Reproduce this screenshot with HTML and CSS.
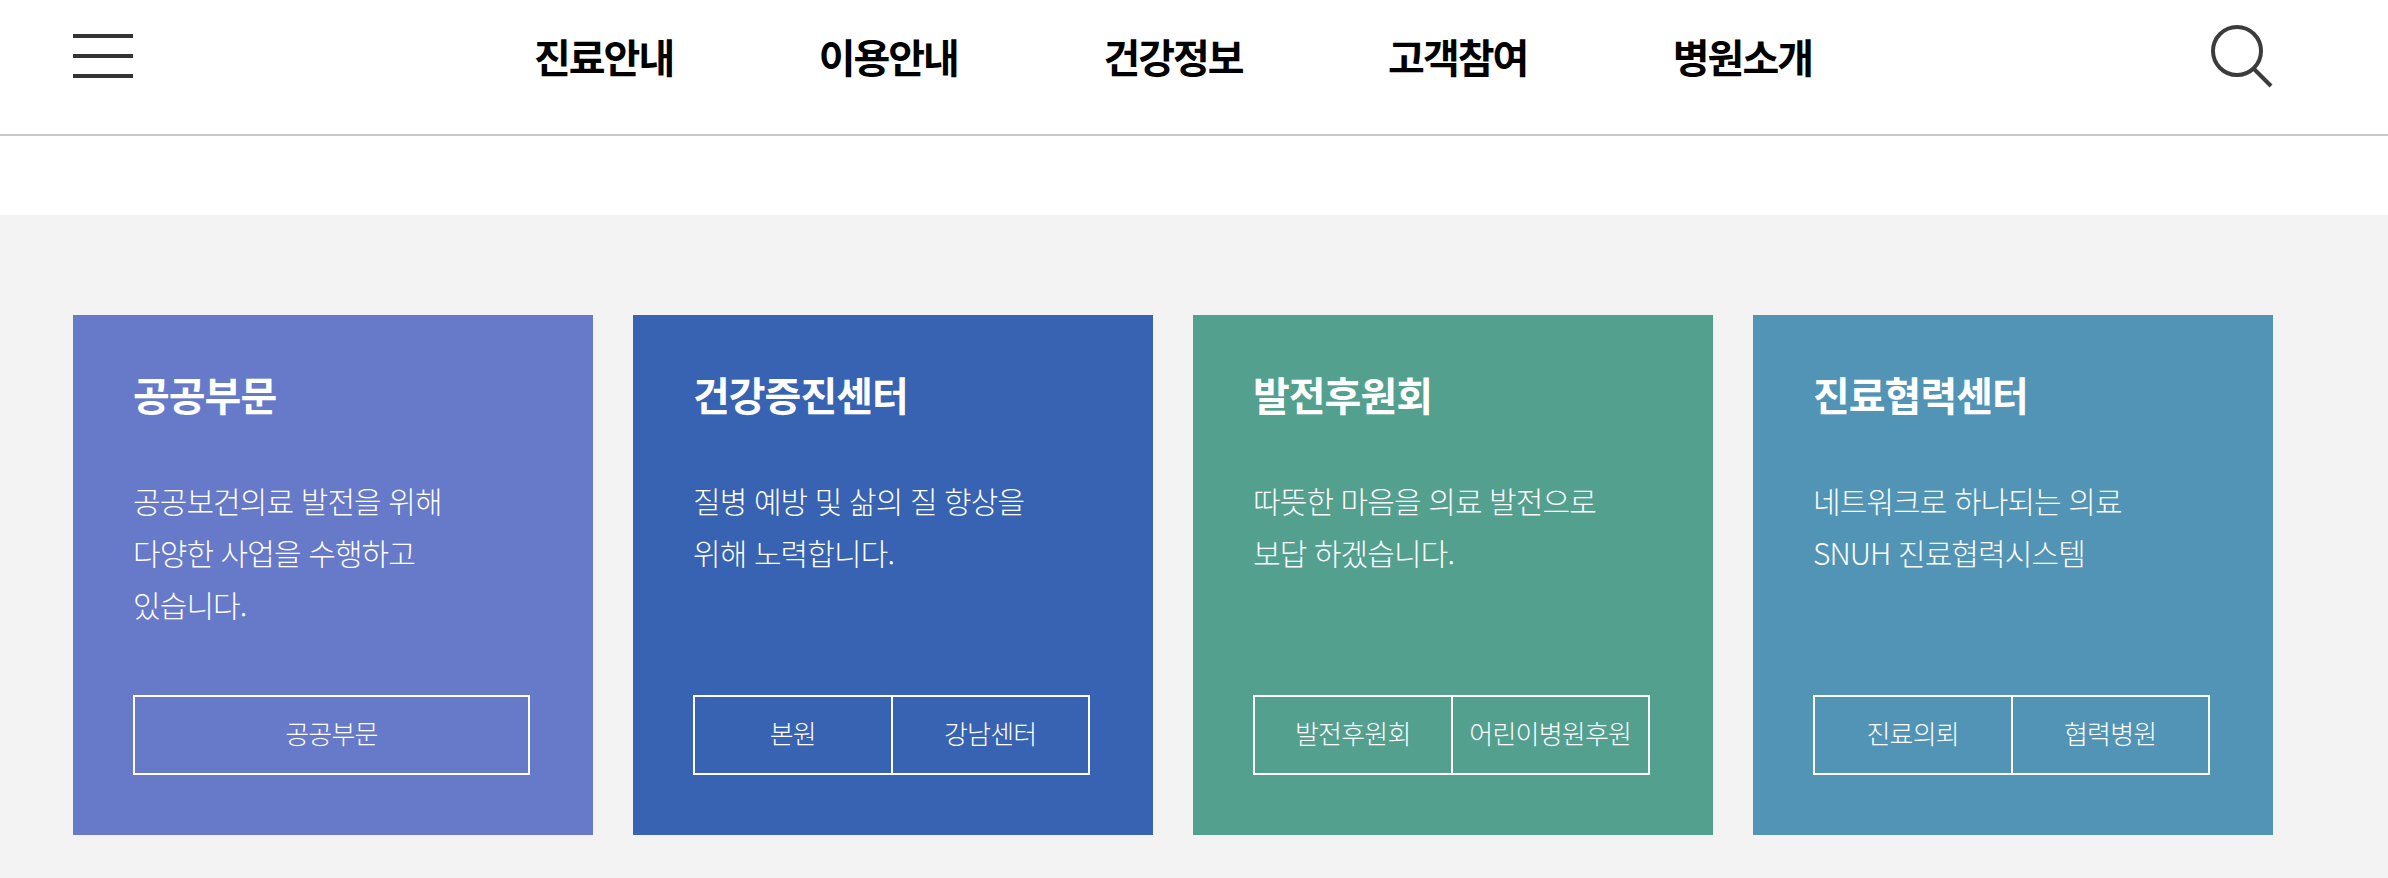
FILE: index.html

```html
<!DOCTYPE html>
<html lang="ko">
<head>
  <meta charset="UTF-8">
  <title>서울대학교병원</title>
  <link rel="stylesheet" href="styles.css">
</head>
<body>

<header class="header">
  <a class="menu-btn" href="#">
    <span></span>
    <span></span>
    <span></span>
  </a>
  <nav class="gnb">
    <a href="#">진료안내</a>
    <a href="#">이용안내</a>
    <a href="#">건강정보</a>
    <a href="#">고객참여</a>
    <a href="#">병원소개</a>
  </nav>
  <a class="search-btn" href="#">
    <svg width="62" height="64" viewBox="0 0 62 64">
      <circle cx="26" cy="26" r="24" fill="none" stroke="#3c3c3c" stroke-width="4"/>
      <path d="M43 44 L60 61" fill="none" stroke="#3c3c3c" stroke-width="4"/>
    </svg>
  </a>
</header>

<section class="cards">
  <div class="card card-public">
    <h3>공공부문</h3>
    <p>공공보건의료 발전을 위해<br>다양한 사업을 수행하고<br>있습니다.</p>
    <div class="card-links">
      <a href="#">공공부문</a>
    </div>
  </div>
  <div class="card card-health">
    <h3>건강증진센터</h3>
    <p>질병 예방 및 삶의 질 향상을<br>위해 노력합니다.</p>
    <div class="card-links">
      <a href="#">본원</a>
      <a href="#">강남센터</a>
    </div>
  </div>
  <div class="card card-donate">
    <h3>발전후원회</h3>
    <p>따뜻한 마음을 의료 발전으로<br>보답 하겠습니다.</p>
    <div class="card-links">
      <a href="#">발전후원회</a>
      <a href="#">어린이병원후원</a>
    </div>
  </div>
  <div class="card card-network">
    <h3>진료협력센터</h3>
    <p>네트워크로 하나되는 의료<br>SNUH 진료협력시스템</p>
    <div class="card-links">
      <a href="#">진료의뢰</a>
      <a href="#">협력병원</a>
    </div>
  </div>
</section>

</body>
</html>
```

FILE: styles.css

```css
* {
  box-sizing: border-box;
}
body {
  margin: 0;
  background-color: #fff;
  font-family: "Noto Sans CJK KR", "Noto Sans", sans-serif;
}
a {
  color: inherit;
  text-decoration: none;
}
.header {
  display: flex;
  align-items: center;
  height: 136px;
  padding: 0 115px 0 73px;
  border-bottom: 2px solid #c8c8c8;
}
.menu-btn {
  display: flex;
  flex-direction: column;
  justify-content: space-between;
  width: 60px;
  height: 44px;
  margin-top: -22px;
}
.menu-btn span {
  display: block;
  height: 4px;
  background-color: #333;
}
.gnb {
  display: flex;
  gap: 145.5px;
  margin-left: 401px;
  margin-top: -22px;
  color: #000;
  font-size: 40px;
  font-weight: 700;
  letter-spacing: -2px;
  line-height: 60px;
}
.search-btn {
  display: block;
  height: 64px;
  margin-left: auto;
  margin-top: -20px;
}
.cards {
  display: flex;
  gap: 40px;
  margin-top: 79px;
  padding: 100px 115px 43px 73px;
  background-color: #f3f3f3;
}
.card {
  display: flex;
  flex-direction: column;
  width: 520px;
  height: 520px;
  padding: 49px 63px 60px 60px;
  color: #fff;
}
.card-public { background-color: #6779c9; }
.card-health { background-color: #3862b2; }
.card-donate { background-color: #54a08f; }
.card-network { background-color: #5194b5; }
.card h3 {
  margin: 0 0 50px;
  font-size: 40px;
  font-weight: 700;
  letter-spacing: -1px;
  line-height: 60px;
}
.card p {
  margin: 0;
  font-size: 30px;
  font-weight: 300;
  letter-spacing: -0.9px;
  line-height: 52px;
}
.card-links {
  display: flex;
  margin-top: auto;
  border: 2px solid #fff;
  height: 80px;
}
.card-links a {
  flex: 1;
  font-size: 26px;
  font-weight: 300;
  letter-spacing: -0.8px;
  line-height: 72px;
  text-align: center;
}
.card-links a + a {
  border-left: 2px solid #fff;
}
```
